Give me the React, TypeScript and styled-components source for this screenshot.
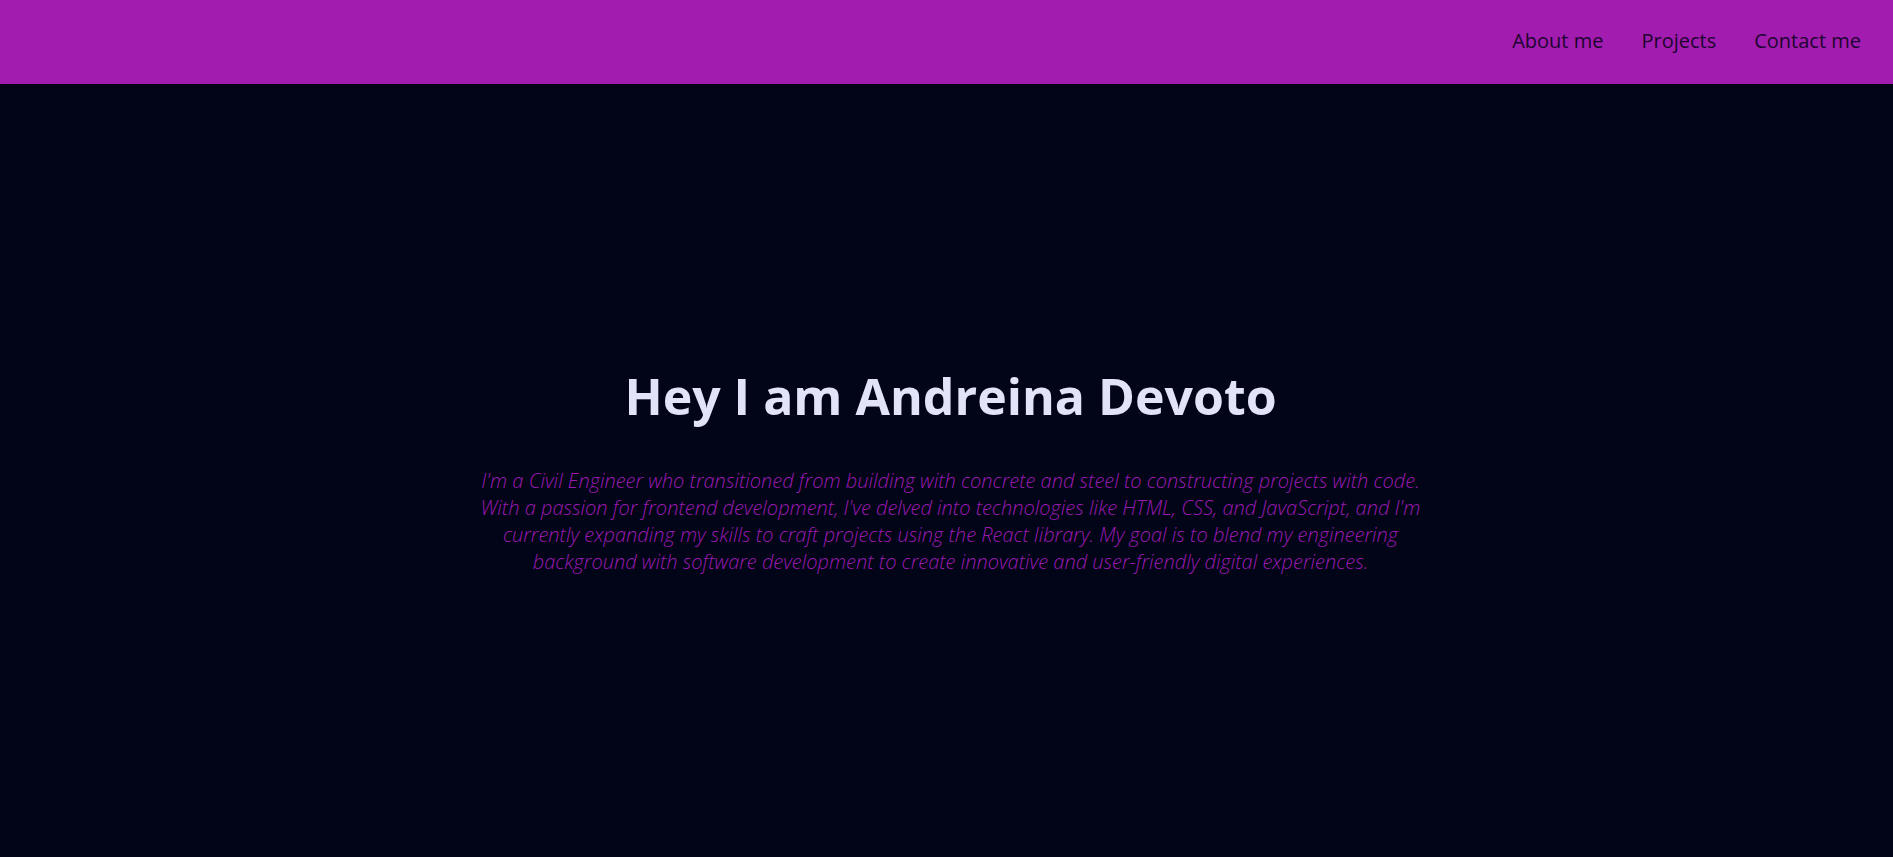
import React from "react";
import styled, { createGlobalStyle } from "styled-components";

const GlobalStyle = createGlobalStyle`
  html, body { margin: 0; padding: 0; }
  body {
    background: #020418;
    font-family: "Open Sans", "Noto Sans", sans-serif;
  }
  * { box-sizing: border-box; }
`;

const Page = styled.div`
  min-height: 100vh;
  display: flex;
  flex-direction: column;
  background: #020418;
`;

const NavBar = styled.header`
  height: 84px;
  background: #a21caf;
  display: flex;
  align-items: center;
  justify-content: flex-end;
  padding: 0 32px 4px 0;
`;

const NavList = styled.nav`
  display: flex;
  gap: 38px;
`;

const NavLink = styled.a`
  font-family: "Open Sans", sans-serif;
  font-size: 20px;
  color: #1d0430;
  text-decoration: none;
`;

const Hero = styled.main`
  flex: 1;
  display: flex;
  flex-direction: column;
  align-items: center;
  justify-content: center;
  text-align: center;
  padding: 0 16px 0 24px;
`;

const Title = styled.h1`
  margin: 0 0 41px;
  font-family: "Open Sans", sans-serif;
  font-weight: 700;
  font-size: 50px;
  line-height: 1.2;
  color: #e2e2f8;
`;

const Intro = styled.p`
  margin: 0;
  max-width: 960px;
  font-family: "Open Sans", sans-serif;
  font-style: italic;
  font-weight: 300;
  font-size: 20px;
  line-height: 27px;
  color: #9a1bb2;
`;

export default function App() {
  return (
    <>
      <GlobalStyle />
      <Page>
        <NavBar>
          <NavList>
            <NavLink href="#about">About me</NavLink>
            <NavLink href="#projects">Projects</NavLink>
            <NavLink href="#contact">Contact me</NavLink>
          </NavList>
        </NavBar>
        <Hero>
          <Title>Hey I am Andreina Devoto</Title>
          <Intro>
            I'm a Civil Engineer who transitioned from building with concrete and steel to constructing projects with code.
            With a passion for frontend development, I've delved into technologies like HTML, CSS, and JavaScript, and I'm
            currently expanding my skills to craft projects using the React library. My goal is to blend my engineering
            background with software development to create innovative and user-friendly digital experiences.
          </Intro>
        </Hero>
      </Page>
    </>
  );
}
